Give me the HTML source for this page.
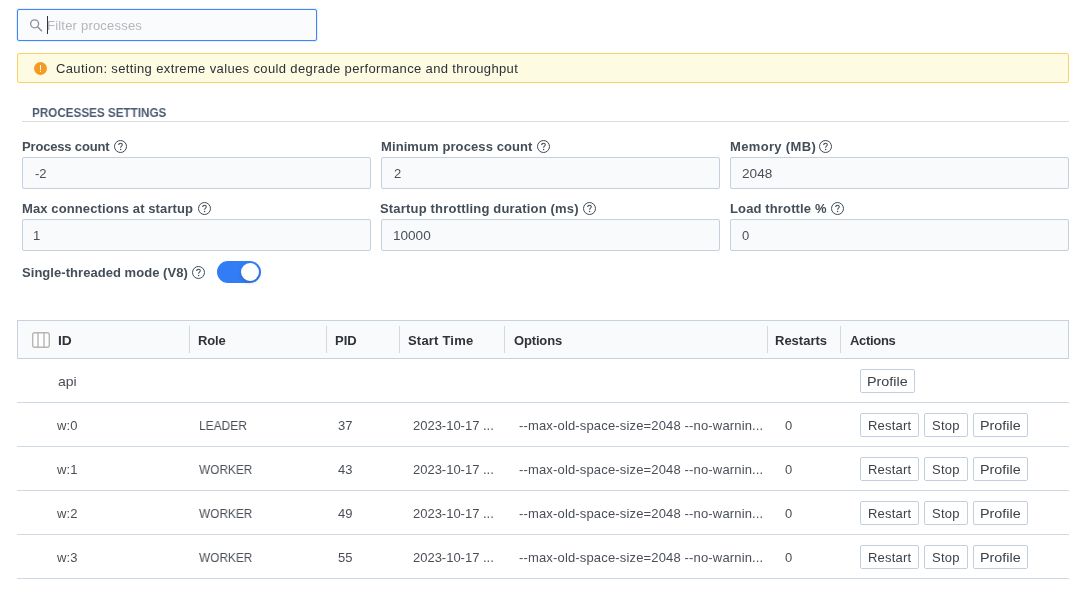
<!DOCTYPE html>
<html><head><meta charset="utf-8">
<style>
*{box-sizing:border-box;margin:0;padding:0}
html,body{width:1080px;height:596px;background:#fff;overflow:hidden}
body{font-family:"Liberation Sans",sans-serif;font-size:13px;color:#4a4f57;position:relative}
.abs{position:absolute;white-space:nowrap}
body>div[id]{will-change:transform}
.search{left:17px;top:9px;width:300px;height:32px;border:1px solid #3f85f5;border-radius:2px;background:#fafbfd;box-shadow:0 0 0 1px rgba(63,133,245,.13)}
.ph{font-size:13px;color:#b3b6bb}
.cur{left:47px;top:16px;width:1px;height:18px;background:#333}
.alert{left:17px;top:53px;width:1052px;height:30px;border:1px solid #fdd166;border-radius:2px;background:#fdfbe1}
.at{font-size:13px;color:#2d3138}
.ic{left:34px;top:62px;width:13px;height:13px;border-radius:50%;background:#f59a23}
.sect{font-size:13px;font-weight:bold;color:#4c5b72}
.hr{left:22px;top:121px;width:1047px;height:1px;background:#d9dde2}
.lbl{font-size:13px;font-weight:bold;color:#444e58}
.inp{height:32px;border:1px solid #c4d0db;border-radius:2px;background:#f9fafc}
.val{font-size:13px;color:#4a4f57}
.th{font-weight:bold;color:#2f3338;font-size:13px}
.thead{left:17px;top:320px;width:1052px;height:39px;border:1px solid #c7d2de;background:#f9fafc}
.sep{top:326px;width:1px;height:27px;background:#d5d9de}
.rowb{left:17px;width:1052px;height:1px;background:#d0dae5}
.td{font-size:13px;color:#4a4f57}
.btn{height:24px;border:1px solid #c3cfdd;border-radius:2px;background:#fff}
.bt{font-size:13px;color:#3d4249}
</style></head><body>
<div class="abs search"></div>
<svg class="abs" style="left:29px;top:18px" width="14" height="14" viewBox="0 0 14 14"><circle cx="5.6" cy="5.8" r="4" fill="none" stroke="#8a8f96" stroke-width="1.3"/><path d="M8.5 8.8L13 13.2" stroke="#8a8f96" stroke-width="1.4"/></svg>
<div class="abs cur"></div>
<div class="abs alert"></div><div class="abs ic"></div><div class="abs" style="left:40px;top:64.5px;width:1px;height:5px;background:#fff"></div><div class="abs" style="left:40px;top:71px;width:1px;height:1.3px;background:#fff"></div>
<div class="abs hr"></div>

<div id="ph" class="abs ph" style="left:47.45px;top:18px;letter-spacing:0.207px">Filter processes</div>
<div id="at" class="abs at" style="left:55.60px;top:61px;letter-spacing:0.367px">Caution: setting extreme values could degrade performance and throughput</div>
<div id="sect" class="abs sect" style="left:31.70px;top:105px;transform-origin:0 0;transform:scaleX(0.8985)">PROCESSES SETTINGS</div>
<div class="abs inp" style="left:22px;top:157px;width:349px"></div>
<div class="abs inp" style="left:381px;top:157px;width:339px"></div>
<div class="abs inp" style="left:730px;top:157px;width:339px"></div>
<div class="abs inp" style="left:22px;top:219px;width:349px"></div>
<div class="abs inp" style="left:381px;top:219px;width:339px"></div>
<div class="abs inp" style="left:730px;top:219px;width:339px"></div>
<div id="l1" class="abs lbl" style="left:22.01px;top:139px;letter-spacing:-0.170px">Process count</div>
<svg class="abs" style="left:114px;top:140px" width="13" height="13" viewBox="0 0 13 13"><circle cx="6.5" cy="6.5" r="6" fill="none" stroke="#414a53" stroke-width="1"/><path d="M4.7 5.1C4.7 3.9 5.5 3.3 6.5 3.3C7.6 3.3 8.3 3.9 8.3 4.8C8.3 6.1 6.6 6.2 6.6 7.7" fill="none" stroke="#414a53" stroke-width="1.05"/><circle cx="6.6" cy="9.5" r="0.7" fill="#414a53"/></svg>
<div id="l2" class="abs lbl" style="left:380.94px;top:139px;letter-spacing:0.095px">Minimum process count</div>
<svg class="abs" style="left:537px;top:140px" width="13" height="13" viewBox="0 0 13 13"><circle cx="6.5" cy="6.5" r="6" fill="none" stroke="#414a53" stroke-width="1"/><path d="M4.7 5.1C4.7 3.9 5.5 3.3 6.5 3.3C7.6 3.3 8.3 3.9 8.3 4.8C8.3 6.1 6.6 6.2 6.6 7.7" fill="none" stroke="#414a53" stroke-width="1.05"/><circle cx="6.6" cy="9.5" r="0.7" fill="#414a53"/></svg>
<div id="l3" class="abs lbl" style="left:729.51px;top:139px;letter-spacing:0.339px">Memory (MB)</div>
<svg class="abs" style="left:819px;top:140px" width="13" height="13" viewBox="0 0 13 13"><circle cx="6.5" cy="6.5" r="6" fill="none" stroke="#414a53" stroke-width="1"/><path d="M4.7 5.1C4.7 3.9 5.5 3.3 6.5 3.3C7.6 3.3 8.3 3.9 8.3 4.8C8.3 6.1 6.6 6.2 6.6 7.7" fill="none" stroke="#414a53" stroke-width="1.05"/><circle cx="6.6" cy="9.5" r="0.7" fill="#414a53"/></svg>
<div id="l4" class="abs lbl" style="left:22.01px;top:201px;letter-spacing:0.107px">Max connections at startup</div>
<svg class="abs" style="left:198px;top:202px" width="13" height="13" viewBox="0 0 13 13"><circle cx="6.5" cy="6.5" r="6" fill="none" stroke="#414a53" stroke-width="1"/><path d="M4.7 5.1C4.7 3.9 5.5 3.3 6.5 3.3C7.6 3.3 8.3 3.9 8.3 4.8C8.3 6.1 6.6 6.2 6.6 7.7" fill="none" stroke="#414a53" stroke-width="1.05"/><circle cx="6.6" cy="9.5" r="0.7" fill="#414a53"/></svg>
<div id="l5" class="abs lbl" style="left:380.46px;top:201px;letter-spacing:0.187px">Startup throttling duration (ms)</div>
<svg class="abs" style="left:583px;top:202px" width="13" height="13" viewBox="0 0 13 13"><circle cx="6.5" cy="6.5" r="6" fill="none" stroke="#414a53" stroke-width="1"/><path d="M4.7 5.1C4.7 3.9 5.5 3.3 6.5 3.3C7.6 3.3 8.3 3.9 8.3 4.8C8.3 6.1 6.6 6.2 6.6 7.7" fill="none" stroke="#414a53" stroke-width="1.05"/><circle cx="6.6" cy="9.5" r="0.7" fill="#414a53"/></svg>
<div id="l6" class="abs lbl" style="left:729.51px;top:201px;letter-spacing:0.134px">Load throttle %</div>
<svg class="abs" style="left:831px;top:202px" width="13" height="13" viewBox="0 0 13 13"><circle cx="6.5" cy="6.5" r="6" fill="none" stroke="#414a53" stroke-width="1"/><path d="M4.7 5.1C4.7 3.9 5.5 3.3 6.5 3.3C7.6 3.3 8.3 3.9 8.3 4.8C8.3 6.1 6.6 6.2 6.6 7.7" fill="none" stroke="#414a53" stroke-width="1.05"/><circle cx="6.6" cy="9.5" r="0.7" fill="#414a53"/></svg>
<div id="l7" class="abs lbl" style="left:21.96px;top:265px;letter-spacing:0.047px">Single-threaded mode (V8)</div>
<svg class="abs" style="left:192px;top:266px" width="13" height="13" viewBox="0 0 13 13"><circle cx="6.5" cy="6.5" r="6" fill="none" stroke="#414a53" stroke-width="1"/><path d="M4.7 5.1C4.7 3.9 5.5 3.3 6.5 3.3C7.6 3.3 8.3 3.9 8.3 4.8C8.3 6.1 6.6 6.2 6.6 7.7" fill="none" stroke="#414a53" stroke-width="1.05"/><circle cx="6.6" cy="9.5" r="0.7" fill="#414a53"/></svg>
<div id="v1" class="abs val" style="left:34.61px;top:166px;transform-origin:0 0;transform:scaleX(0.9826)">-2</div>
<div id="v2" class="abs val" style="left:393.63px;top:166px;letter-spacing:0.000px">2</div>
<div id="v3" class="abs val" style="left:741.56px;top:166px;transform-origin:0 0;transform:scaleX(1.0467)">2048</div>
<div id="v4" class="abs val" style="left:33.38px;top:228px;letter-spacing:0.000px">1</div>
<div id="v5" class="abs val" style="left:393.37px;top:228px;transform-origin:0 0;transform:scaleX(1.0429)">10000</div>
<div id="v6" class="abs val" style="left:741.65px;top:228px;letter-spacing:0.000px">0</div>
<div class="abs" style="left:217px;top:261px;width:44px;height:22px;border-radius:11px;background:#327df6"><div class="abs" style="left:24px;top:2px;width:18px;height:18px;border-radius:50%;background:#fff;box-shadow:0 2px 4px rgba(0,35,11,.2)"></div></div>
<div class="abs thead"></div>
<svg class="abs" style="left:32px;top:332px" width="18" height="16" viewBox="0 0 18 16"><rect x="0.7" y="0.7" width="16.6" height="14.6" rx="2" fill="#fdfdfd" stroke="#b6b6b6" stroke-width="1.4"/><path d="M6 0.5V15.5M12 0.5V15.5" stroke="#b6b6b6" stroke-width="1.4"/></svg>
<div class="abs sep" style="left:189px"></div>
<div class="abs sep" style="left:326px"></div>
<div class="abs sep" style="left:399px"></div>
<div class="abs sep" style="left:504px"></div>
<div class="abs sep" style="left:767px"></div>
<div class="abs sep" style="left:840px"></div>
<div id="h1" class="abs th" style="left:58.17px;top:333px;transform-origin:0 0;transform:scaleX(1.0599)">ID</div>
<div id="h2" class="abs th" style="left:198.17px;top:333px;letter-spacing:-0.157px">Role</div>
<div id="h3" class="abs th" style="left:334.52px;top:333px;letter-spacing:-0.019px">PID</div>
<div id="h4" class="abs th" style="left:408.09px;top:333px;letter-spacing:0.200px">Start Time</div>
<div id="h5" class="abs th" style="left:514.11px;top:333px;letter-spacing:-0.160px">Options</div>
<div id="h6" class="abs th" style="left:774.77px;top:333px;letter-spacing:-0.002px">Restarts</div>
<div id="h7" class="abs th" style="left:849.67px;top:333px;letter-spacing:-0.323px">Actions</div>
<div class="abs rowb" style="top:402px"></div>
<div id="r0a" class="abs td" style="left:57.67px;top:374px;transform-origin:0 0;transform:scaleX(1.0777)">api</div>
<div class="abs btn" style="left:860px;top:369px;width:55px"></div>
<div id="r0b2" class="abs bt" style="left:866.90px;top:374px;transform-origin:0 0;transform:scaleX(1.1033)">Profile</div>
<div class="abs rowb" style="top:446px"></div>
<div id="r1a" class="abs td" style="left:56.55px;top:418px;letter-spacing:0.180px">w:0</div>
<div id="r1b" class="abs td" style="left:199.32px;top:418px;transform-origin:0 0;transform:scaleX(0.9193)">LEADER</div>
<div id="r1c" class="abs td" style="left:338.03px;top:418px;transform-origin:0 0;transform:scaleX(1.0000)">37</div>
<div id="r1d" class="abs td" style="left:413.20px;top:418px;letter-spacing:-0.015px">2023-10-17 ...</div>
<div id="r1e" class="abs td" style="left:519.07px;top:418px;letter-spacing:0.158px">--max-old-space-size=2048 --no-warnin...</div>
<div id="r1f" class="abs td" style="left:785.38px;top:418px;letter-spacing:0.000px">0</div>
<div class="abs btn" style="left:860px;top:413px;width:59px"></div>
<div id="r1b0" class="abs bt" style="left:867.96px;top:418px;letter-spacing:0.220px">Restart</div>
<div class="abs btn" style="left:924px;top:413px;width:44px"></div>
<div id="r1b1" class="abs bt" style="left:932.19px;top:418px;letter-spacing:0.256px">Stop</div>
<div class="abs btn" style="left:973px;top:413px;width:55px"></div>
<div id="r1b2" class="abs bt" style="left:979.90px;top:418px;transform-origin:0 0;transform:scaleX(1.1033)">Profile</div>
<div class="abs rowb" style="top:490px"></div>
<div id="r2a" class="abs td" style="left:56.55px;top:462px;letter-spacing:0.180px">w:1</div>
<div id="r2b" class="abs td" style="left:199.18px;top:462px;transform-origin:0 0;transform:scaleX(0.9126)">WORKER</div>
<div id="r2c" class="abs td" style="left:338.03px;top:462px;transform-origin:0 0;transform:scaleX(1.0000)">43</div>
<div id="r2d" class="abs td" style="left:413.20px;top:462px;letter-spacing:-0.015px">2023-10-17 ...</div>
<div id="r2e" class="abs td" style="left:519.07px;top:462px;letter-spacing:0.158px">--max-old-space-size=2048 --no-warnin...</div>
<div id="r2f" class="abs td" style="left:785.38px;top:462px;letter-spacing:0.000px">0</div>
<div class="abs btn" style="left:860px;top:457px;width:59px"></div>
<div id="r2b0" class="abs bt" style="left:867.96px;top:462px;letter-spacing:0.220px">Restart</div>
<div class="abs btn" style="left:924px;top:457px;width:44px"></div>
<div id="r2b1" class="abs bt" style="left:932.19px;top:462px;letter-spacing:0.256px">Stop</div>
<div class="abs btn" style="left:973px;top:457px;width:55px"></div>
<div id="r2b2" class="abs bt" style="left:979.90px;top:462px;transform-origin:0 0;transform:scaleX(1.1033)">Profile</div>
<div class="abs rowb" style="top:534px"></div>
<div id="r3a" class="abs td" style="left:56.55px;top:506px;letter-spacing:0.180px">w:2</div>
<div id="r3b" class="abs td" style="left:199.18px;top:506px;transform-origin:0 0;transform:scaleX(0.9126)">WORKER</div>
<div id="r3c" class="abs td" style="left:338.03px;top:506px;transform-origin:0 0;transform:scaleX(1.0000)">49</div>
<div id="r3d" class="abs td" style="left:413.20px;top:506px;letter-spacing:-0.015px">2023-10-17 ...</div>
<div id="r3e" class="abs td" style="left:519.07px;top:506px;letter-spacing:0.158px">--max-old-space-size=2048 --no-warnin...</div>
<div id="r3f" class="abs td" style="left:785.38px;top:506px;letter-spacing:0.000px">0</div>
<div class="abs btn" style="left:860px;top:501px;width:59px"></div>
<div id="r3b0" class="abs bt" style="left:867.96px;top:506px;letter-spacing:0.220px">Restart</div>
<div class="abs btn" style="left:924px;top:501px;width:44px"></div>
<div id="r3b1" class="abs bt" style="left:932.19px;top:506px;letter-spacing:0.256px">Stop</div>
<div class="abs btn" style="left:973px;top:501px;width:55px"></div>
<div id="r3b2" class="abs bt" style="left:979.90px;top:506px;transform-origin:0 0;transform:scaleX(1.1033)">Profile</div>
<div class="abs rowb" style="top:578px"></div>
<div id="r4a" class="abs td" style="left:56.55px;top:550px;letter-spacing:0.180px">w:3</div>
<div id="r4b" class="abs td" style="left:199.18px;top:550px;transform-origin:0 0;transform:scaleX(0.9126)">WORKER</div>
<div id="r4c" class="abs td" style="left:338.03px;top:550px;transform-origin:0 0;transform:scaleX(1.0000)">55</div>
<div id="r4d" class="abs td" style="left:413.20px;top:550px;letter-spacing:-0.015px">2023-10-17 ...</div>
<div id="r4e" class="abs td" style="left:519.07px;top:550px;letter-spacing:0.158px">--max-old-space-size=2048 --no-warnin...</div>
<div id="r4f" class="abs td" style="left:785.38px;top:550px;letter-spacing:0.000px">0</div>
<div class="abs btn" style="left:860px;top:545px;width:59px"></div>
<div id="r4b0" class="abs bt" style="left:867.96px;top:550px;letter-spacing:0.220px">Restart</div>
<div class="abs btn" style="left:924px;top:545px;width:44px"></div>
<div id="r4b1" class="abs bt" style="left:932.19px;top:550px;letter-spacing:0.256px">Stop</div>
<div class="abs btn" style="left:973px;top:545px;width:55px"></div>
<div id="r4b2" class="abs bt" style="left:979.90px;top:550px;transform-origin:0 0;transform:scaleX(1.1033)">Profile</div>
</body></html>
